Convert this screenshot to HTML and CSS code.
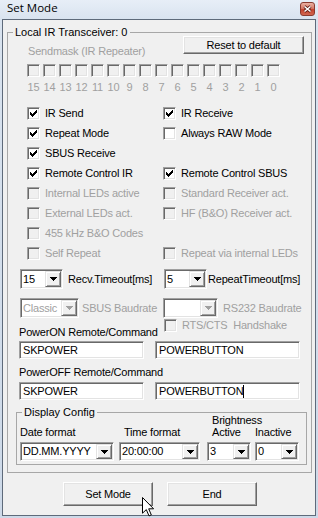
FILE: index.html
```html
<!DOCTYPE html>
<html>
<head>
<meta charset="utf-8">
<title>Set Mode</title>
<link rel="stylesheet" href="styles.css">
</head>
<body>
<div class="window">
  <div class="titlebar">
    <span class="title">Set Mode</span>
    <span class="close"><svg width="9" height="8" viewBox="0 0 9 8"><path d="M1.5 1.5L7.5 6.5M7.5 1.5L1.5 6.5" stroke="#5a1a12" stroke-width="3"/><path d="M1.5 1.5L7.5 6.5M7.5 1.5L1.5 6.5" stroke="#fff" stroke-width="1.6"/></svg></span>
  </div>
  <div class="client">
    <fieldset class="group main">
      <legend>Local IR Transceiver: 0</legend>
      <div class="gbody">
        <div class="toprow">
          <span class="dis sendmask">Sendmask (IR Repeater)</span>
          <button class="btn reset">Reset to default</button>
        </div>
        <div class="maskboxes">
          <span class="cb dis"></span><span class="cb dis"></span><span class="cb dis"></span><span class="cb dis"></span>
          <span class="cb dis"></span><span class="cb dis"></span><span class="cb dis"></span><span class="cb dis"></span>
          <span class="cb dis"></span><span class="cb dis"></span><span class="cb dis"></span><span class="cb dis"></span>
          <span class="cb dis"></span><span class="cb dis"></span><span class="cb dis"></span><span class="cb dis"></span>
        </div>
        <div class="masknums dis">
          <span>15</span><span>14</span><span>13</span><span>12</span><span>11</span><span>10</span><span>9</span><span>8</span>
          <span>7</span><span>6</span><span>5</span><span>4</span><span>3</span><span>2</span><span>1</span><span>0</span>
        </div>
        <div class="checks">
          <label class="chk"><span class="cb"><svg class="tick" viewBox="0 0 7 7"><path d="M6 0h1v1h-1zM5 1h2v1h-2zM0 2h1v1h-1zM4 2h3v1h-3zM0 3h2v1h-2zM3 3h3v1h-3zM0 4h5v1h-5zM1 5h3v1h-3zM2 6h1v1h-1z"/></svg></span>IR Send</label>
          <label class="chk"><span class="cb"><svg class="tick" viewBox="0 0 7 7"><path d="M6 0h1v1h-1zM5 1h2v1h-2zM0 2h1v1h-1zM4 2h3v1h-3zM0 3h2v1h-2zM3 3h3v1h-3zM0 4h5v1h-5zM1 5h3v1h-3zM2 6h1v1h-1z"/></svg></span>IR Receive</label>
          <label class="chk"><span class="cb"><svg class="tick" viewBox="0 0 7 7"><path d="M6 0h1v1h-1zM5 1h2v1h-2zM0 2h1v1h-1zM4 2h3v1h-3zM0 3h2v1h-2zM3 3h3v1h-3zM0 4h5v1h-5zM1 5h3v1h-3zM2 6h1v1h-1z"/></svg></span>Repeat Mode</label>
          <label class="chk"><span class="cb"></span>Always RAW Mode</label>
          <label class="chk"><span class="cb"><svg class="tick" viewBox="0 0 7 7"><path d="M6 0h1v1h-1zM5 1h2v1h-2zM0 2h1v1h-1zM4 2h3v1h-3zM0 3h2v1h-2zM3 3h3v1h-3zM0 4h5v1h-5zM1 5h3v1h-3zM2 6h1v1h-1z"/></svg></span>SBUS Receive</label>
          <span class="empty"></span>
          <label class="chk"><span class="cb"><svg class="tick" viewBox="0 0 7 7"><path d="M6 0h1v1h-1zM5 1h2v1h-2zM0 2h1v1h-1zM4 2h3v1h-3zM0 3h2v1h-2zM3 3h3v1h-3zM0 4h5v1h-5zM1 5h3v1h-3zM2 6h1v1h-1z"/></svg></span>Remote Control IR</label>
          <label class="chk"><span class="cb"><svg class="tick" viewBox="0 0 7 7"><path d="M6 0h1v1h-1zM5 1h2v1h-2zM0 2h1v1h-1zM4 2h3v1h-3zM0 3h2v1h-2zM3 3h3v1h-3zM0 4h5v1h-5zM1 5h3v1h-3zM2 6h1v1h-1z"/></svg></span>Remote Control SBUS</label>
          <label class="chk dis"><span class="cb dis"></span>Internal LEDs active</label>
          <label class="chk dis"><span class="cb dis"></span>Standard Receiver act.</label>
          <label class="chk dis"><span class="cb dis"></span>External LEDs act.</label>
          <label class="chk dis"><span class="cb dis"></span>HF (B&amp;O) Receiver act.</label>
          <label class="chk dis"><span class="cb dis"></span>455 kHz B&amp;O Codes</label>
          <span class="empty"></span>
          <label class="chk dis"><span class="cb dis"></span>Self Repeat</label>
          <label class="chk dis"><span class="cb dis"></span>Repeat via internal LEDs</label>
        </div>

        <div class="timerow">
          <div class="cell">
            <div class="combo w43"><span class="val">15</span><span class="arrow"><svg class="tri" viewBox="0 0 7 4"><path d="M0 0h7v1h-1v1h-1v1h-1v1h-1v-1h-1v-1h-1v-1h-1z"/></svg></span></div>
            <span class="lbl recv">Recv.Timeout[ms]</span>
          </div>
          <div class="cell">
            <div class="combo w43"><span class="val">5</span><span class="arrow"><svg class="tri" viewBox="0 0 7 4"><path d="M0 0h7v1h-1v1h-1v1h-1v1h-1v-1h-1v-1h-1v-1h-1z"/></svg></span></div>
            <span class="lbl rept">RepeatTimeout[ms]</span>
          </div>
        </div>

        <div class="baudrow">
          <div class="bcol left">
            <div class="cell">
              <div class="combo w59 disabled"><span class="val">Classic</span><span class="arrow"><svg class="tri" viewBox="0 0 7 4"><path d="M0 0h7v1h-1v1h-1v1h-1v1h-1v-1h-1v-1h-1v-1h-1z"/></svg></span></div>
              <span class="lbl dis sbus">SBUS Baudrate</span>
            </div>
            <div class="poweron">PowerON Remote/Command</div>
          </div>
          <div class="bcol right">
            <div class="cell">
              <div class="combo w55 disabled"><span class="val"></span><span class="arrow"><svg class="tri" viewBox="0 0 7 4"><path d="M0 0h7v1h-1v1h-1v1h-1v1h-1v-1h-1v-1h-1v-1h-1z"/></svg></span></div>
              <span class="lbl dis rs232">RS232 Baudrate</span>
            </div>
            <label class="chk dis rts"><span class="cb dis"></span>RTS/CTS&nbsp; Handshake</label>
          </div>
        </div>

        <div class="fields">
          <div class="edit e1">SKPOWER</div>
          <div class="edit e2">POWERBUTTON</div>
        </div>
        <div class="poweroff">PowerOFF Remote/Command</div>
        <div class="fields f2">
          <div class="edit e1">SKPOWER</div>
          <div class="edit e2">POWERBUTTON<span class="caret"></span></div>
        </div>

        <fieldset class="group display">
          <legend>Display Config</legend>
          <div class="dbody">
            <span class="bright">Brightness</span>
            <span class="dl">Date format</span>
            <span class="dl off5">Time format</span>
            <span class="dl off5">Active</span>
            <span class="dl">Inactive</span>
            <div class="combo sm w94"><span class="val">DD.MM.YYYY</span><span class="arrow"><svg class="tri" viewBox="0 0 7 4"><path d="M0 0h7v1h-1v1h-1v1h-1v1h-1v-1h-1v-1h-1v-1h-1z"/></svg></span></div>
            <div class="combo sm w81"><span class="val">20:00:00</span><span class="arrow"><svg class="tri" viewBox="0 0 7 4"><path d="M0 0h7v1h-1v1h-1v1h-1v1h-1v-1h-1v-1h-1v-1h-1z"/></svg></span></div>
            <div class="combo sm w44"><span class="val">3</span><span class="arrow"><svg class="tri" viewBox="0 0 7 4"><path d="M0 0h7v1h-1v1h-1v1h-1v1h-1v-1h-1v-1h-1v-1h-1z"/></svg></span></div>
            <div class="combo sm w44"><span class="val">0</span><span class="arrow"><svg class="tri" viewBox="0 0 7 4"><path d="M0 0h7v1h-1v1h-1v1h-1v1h-1v-1h-1v-1h-1v-1h-1z"/></svg></span></div>
          </div>
        </fieldset>
      </div>
    </fieldset>

    <div class="buttons">
      <button class="btn big">Set Mode</button>
      <button class="btn big">End</button>
    </div>
  </div>
  <svg class="cursor" width="13" height="20" viewBox="0 0 13 20"><path d="M0.5 0.5L0.5 16.2L4.3 12.6L7 18.9L9.3 17.9L6.7 11.8L11.6 11.8Z" fill="#fff" stroke="#000" stroke-width="1" stroke-linejoin="miter"/></svg>
</div>
</body>
</html>
```
FILE: styles.css
```css
* { box-sizing: border-box; }
html, body { margin: 0; padding: 0; }
body {
  width: 318px;
  height: 518px;
  overflow: hidden;
  font-family: "Liberation Sans", Arial, sans-serif;
  font-size: 11px;
  line-height: 13px;
  letter-spacing: -0.2px;
  color: #000;
}
.window {
  position: relative;
  width: 318px;
  height: 518px;
  padding: 0 2px 2px 2px;
  display: flex;
  flex-direction: column;
  background: linear-gradient(to bottom, #e7eef7 0, #d9e3ef 19px, #cdd9e8 100%);
}
.titlebar {
  height: 19px;
  flex: none;
  display: flex;
  justify-content: space-between;
  align-items: flex-start;
  padding: 0 1px 0 5px;
}
.title {
  font-family: "Open Sans", "Noto Sans", sans-serif;
  font-size: 11.5px;
  line-height: 16px;
  letter-spacing: 0;
  color: #000;
}
.close {
  width: 15px;
  height: 14px;
  margin-top: 2px;
  border: 1px solid #8a3a2e;
  border-radius: 3px;
  background: linear-gradient(to bottom, #eab0a2 0, #d77a68 45%, #c4432f 55%, #cf6650 100%);
  display: flex;
  align-items: center;
  justify-content: center;
}
.close svg { display: block; }
.client {
  flex: 1;
  border: 1px solid #5e6a7a;
  background: #f0f0f0;
  display: flex;
  flex-direction: column;
}
fieldset.group {
  margin: 0;
  padding: 0;
  min-width: 0;
  border: 1px solid #a7a7a7;
}
fieldset.group legend {
  padding: 0 2px;
  margin-left: 5px;
  line-height: 13px;
  letter-spacing: 0;
}
.main {
  margin: 6px 0 0 4px !important;
  width: 305px;
}
.gbody {
  padding: 0 7px 7px 11px;
}
.dis { color: #a0a0a0; }
.toprow {
  display: flex;
  justify-content: space-between;
  height: 22px;
  margin-top: -3px;
}
.sendmask {
  margin-left: 9px;
  align-self: flex-end;
}
.btn {
  font: inherit;
  letter-spacing: inherit;
  color: #000;
  background: #f0f0f0;
  border: 1px solid;
  border-color: #fff #696969 #696969 #fff;
  box-shadow: inset -1px -1px 0 #a0a0a0, inset 1px 1px 0 #e3e3e3;
  padding: 0;
  line-height: 13px;
}
.reset { width: 121px; height: 18px; }
.cb {
  display: block;
  flex: none;
  width: 13px;
  height: 13px;
  padding: 2px;
  border: 1px solid;
  border-color: #a0a0a0 #fff #fff #a0a0a0;
  box-shadow: inset 1px 1px 0 #696969, inset -1px -1px 0 #e3e3e3;
  background: #fff;
}
.cb.dis { background: #f0f0f0; }
.tick { display: block; width: 7px; height: 7px; fill: #000; shape-rendering: crispEdges; }
.maskboxes {
  display: flex;
  gap: 3px;
  margin-top: 6px;
  padding-left: 8px;
}
.masknums {
  display: grid;
  grid-template-columns: repeat(16, 13px);
  column-gap: 3px;
  justify-items: center;
  margin-top: 4px;
  padding-left: 8px;
  white-space: nowrap;
}
.checks {
  display: grid;
  grid-template-columns: 136px 1fr;
  grid-auto-rows: 20px;
  margin-top: 10px;
  padding-left: 8px;
}
.chk {
  display: flex;
  align-items: flex-start;
  gap: 5px;
  padding-top: 3px;
  white-space: nowrap;
}
.timerow {
  display: grid;
  grid-template-columns: 144px 1fr;
  margin-top: 5px;
  padding-left: 1px;
}
.cell { display: flex; align-items: center; white-space: nowrap; }
.combo {
  display: flex;
  flex: none;
  height: 20px;
  padding: 1px;
  border: 1px solid;
  border-color: #a0a0a0 #fff #fff #a0a0a0;
  box-shadow: inset 1px 1px 0 #696969, inset -1px -1px 0 #e3e3e3;
  background: #fff;
}
.combo.sm { height: 19px; }
.combo .val {
  flex: 1;
  padding-left: 1px;
  line-height: 16px;
  white-space: nowrap;
  overflow: hidden;
}
.combo.sm .val { line-height: 15px; }
.combo .arrow {
  width: 16px;
  flex: none;
  border: 1px solid;
  border-color: #e3e3e3 #696969 #696969 #e3e3e3;
  box-shadow: inset 1px 1px 0 #fff, inset -1px -1px 0 #a0a0a0;
  background: #f0f0f0;
  display: flex;
  align-items: center;
  justify-content: center;
}
.tri { display: block; width: 7px; height: 4px; fill: #000; shape-rendering: crispEdges; }
.combo.disabled .val { color: #a0a0a0; }
.combo.disabled .tri { fill: #a0a0a0; }
.w43 { width: 43px; }
.w44 { width: 44px; }
.w55 { width: 55px; }
.w59 { width: 59px; }
.w81 { width: 81px; }
.w94 { width: 94px; }
.recv { margin-left: 5px; }
.rept { margin-left: 1px; }
.baudrow {
  display: grid;
  grid-template-columns: 143px 1fr;
  margin-top: 9px;
  padding-left: 1px;
}
.sbus { margin-left: 3px; }
.rs232 { margin-left: 5px; }
.poweron { margin-top: 8px; margin-left: -1px; white-space: nowrap; }
.rts { margin-left: 1px; margin-top: 1px; padding-top: 0; }
.fields { display: flex; margin-top: 2px; }
.fields.f2 { margin-top: 3px; }
.edit {
  height: 18px;
  padding: 0 3px;
  border: 1px solid;
  border-color: #a0a0a0 #fff #fff #a0a0a0;
  box-shadow: inset 1px 1px 0 #696969, inset -1px -1px 0 #e3e3e3;
  background: #fff;
  line-height: 16px;
  white-space: nowrap;
}
.e1 { width: 125px; }
.e2 { width: 145px; margin-left: 11px; }
.caret {
  display: inline-block;
  width: 1px;
  height: 13px;
  background: #000;
  vertical-align: -3px;
}
.poweroff { margin-top: 7px; }
.display {
  margin: 6px 0 0 -3px !important;
  width: 291px;
}
.dbody {
  display: grid;
  grid-template-columns: 99px 88px 48px 44px;
  grid-template-rows: 12px 13px 19px;
  margin-top: -5px;
  padding: 0 0 6px 3px;
}
.bright { grid-column: 3 / span 2; margin-left: 5px; line-height: 12px; white-space: nowrap; }
.dl { grid-row: 2; white-space: nowrap; line-height: 13px; }
.off5 { margin-left: 5px; }
.dbody .combo { grid-row: 3; margin-top: 3px; }
.buttons {
  display: flex;
  gap: 14px;
  margin-top: 9px;
  padding-left: 60px;
}
.big { width: 90px; height: 24px; }
.cursor {
  position: absolute;
  left: 142px;
  top: 497px;
  display: block;
}
```
